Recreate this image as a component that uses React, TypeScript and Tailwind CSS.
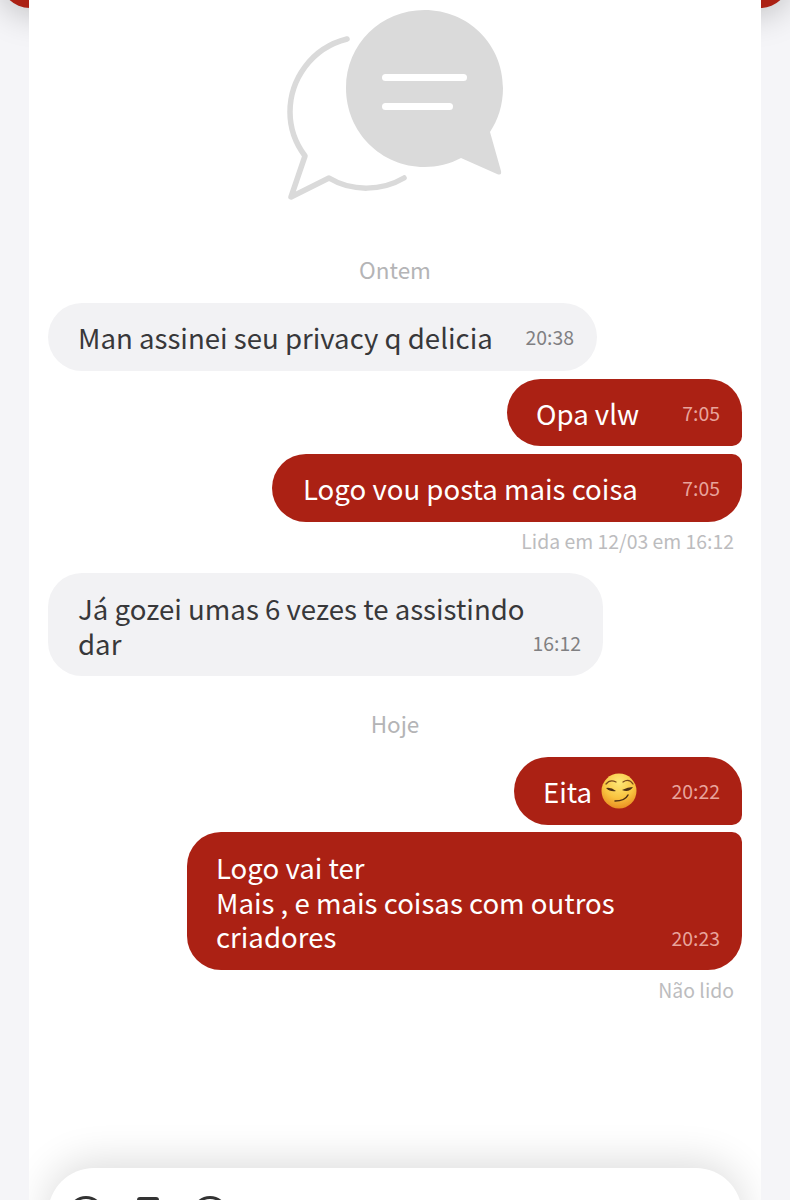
import React from 'react';

const FONT = '"Noto Sans CJK JP", "Noto Sans", sans-serif';

const EmptyIcon = () => (
  <svg width="270" height="210" viewBox="0 0 270 210" className="block">
    <path
      d="M347 39 C 311 48 290 80 290 112 C 290 129 296 144 305 156 L 291 197 L 329 178 C 352 192 382 191 404 178"
      transform="translate(-260 0)"
      fill="none"
      stroke="#dadada"
      strokeWidth="5.5"
      strokeLinecap="round"
      strokeLinejoin="round"
    />
    <path
      d="M346 88 C 346 44 381 10 424.500 10 C 468 10 503 44 503 88 C 503 105 498 120 490 132 L 501 171 Q 502 176 497 174 L 461 158 C 450 164 437 167 424.500 167 C 381 167 346 132 346 88 Z"
      transform="translate(-260 0)"
      fill="#dadada"
    />
    <rect x="122" y="74" width="85" height="7" rx="3.500" fill="#ffffff" />
    <rect x="122" y="103" width="71" height="7" rx="3.500" fill="#ffffff" />
  </svg>
);

const SmirkEmoji = () => (
  <svg width="36" height="36" viewBox="0 0 36 36" className="block">
    <defs>
      <radialGradient id="smirkFace" cx="50%" cy="25%" r="75%">
        <stop offset="0%" stopColor="#fde878" />
        <stop offset="60%" stopColor="#f9c440" />
        <stop offset="100%" stopColor="#ea8f22" />
      </radialGradient>
    </defs>
    <circle cx="18" cy="18" r="17.500" fill="url(#smirkFace)" />
    <path d="M5 11 Q 9 6 15 9" fill="none" stroke="#7a4a1c" strokeWidth="1.300" strokeLinecap="round" />
    <path d="M22 9 Q 28 5 32 11" fill="none" stroke="#7a4a1c" strokeWidth="1.300" strokeLinecap="round" />
    <path d="M5 15 Q 10 14 15 18 Q 9 19 5 15 Z" fill="#4f3014" />
    <path d="M21 17 Q 27 14 32 14 Q 28 20 21 17 Z" fill="#4f3014" />
    <path d="M14 28 Q 24 28 27 22" fill="none" stroke="#4f3014" strokeWidth="1.500" strokeLinecap="round" />
  </svg>
);

const DayLabel = ({ children, className }: { children: string; className: string }) => (
  <div className={`text-center text-[22.500px] leading-[34px] text-[#b4b4b6] ${className}`}>{children}</div>
);

const Status = ({ children, className }: { children: string; className: string }) => (
  <div className={`pr-[8px] text-right text-[19.400px] leading-[30px] text-[#bcbcbe] ${className}`}>{children}</div>
);

const App: React.FC = () => {
  return (
    <div className="relative h-[1200px] w-[790px] overflow-hidden bg-[#f5f5f8]" style={{ fontFamily: FONT }}>
      {/* red header peeking out behind the panel */}
      <div className="absolute left-0 top-[-60px] h-[68px] w-[790px] rounded-b-[30px] bg-[#ab2114] shadow-[0_6px_34px_rgba(0,0,0,0.22)]" />

      <div className="relative mx-auto flex h-[1200px] w-[732px] flex-col overflow-hidden bg-white px-[19px]">
        <div className="flex justify-center">
          <EmptyIcon />
        </div>

        <DayLabel className="mt-[42px]">Ontem</DayLabel>

        <div className="mt-[17px] flex h-[68px] w-[549px] items-center justify-between rounded-[34px] bg-[#f2f2f4] pl-[30px] pr-[23px]">
          <span className="text-[27.600px] leading-[34px] text-[#38383a]">Man assinei seu privacy q delicia</span>
          <span className="text-[19.400px] text-[#808082]">20:38</span>
        </div>

        <div className="mt-[8px] flex flex-col items-end gap-[8px]">
          <div className="flex h-[67px] w-[235px] items-center justify-between rounded-[34px] rounded-br-[10px] bg-[#ab2114] pl-[29px] pr-[22px]">
            <span className="text-[27.600px] leading-[34px] text-white">Opa vlw</span>
            <span className="text-[19.400px] text-[#e8a49c]">7:05</span>
          </div>
          <div className="flex h-[68px] w-[470px] items-center justify-between rounded-[34px] rounded-tr-[10px] bg-[#ab2114] pl-[31px] pr-[22px]">
            <span className="text-[27.600px] leading-[34px] text-white">Logo vou posta mais coisa</span>
            <span className="text-[19.400px] text-[#e8a49c]">7:05</span>
          </div>
        </div>

        <Status className="mt-[4px]">Lida em 12/03 em 16:12</Status>

        <div className="relative mt-[17px] h-[103px] w-[555px] rounded-[34px] bg-[#f2f2f4] pl-[30px] pt-[18px]">
          <p className="w-[450px] text-[27.600px] leading-[34.500px] text-[#38383a]">Já gozei umas 6 vezes te assistindo dar</p>
          <span className="absolute bottom-[18px] right-[22px] text-[19.400px] leading-[30px] text-[#808082]">16:12</span>
        </div>

        <DayLabel className="mt-[30px]">Hoje</DayLabel>

        <div className="mt-[17px] flex flex-col items-end gap-[7px]">
          <div className="flex h-[68px] w-[228px] items-center justify-between rounded-[34px] rounded-br-[10px] bg-[#ab2114] pl-[29px] pr-[22px]">
            <span className="flex items-center gap-[9px] text-[27.600px] leading-[34px] text-white">
              Eita <SmirkEmoji />
            </span>
            <span className="text-[19.400px] text-[#e8a49c]">20:22</span>
          </div>
          <div className="relative h-[138px] w-[555px] rounded-[34px] rounded-tr-[10px] bg-[#ab2114] pl-[29px] pt-[18px]">
            <p className="w-[420px] text-[27.600px] leading-[34.500px] text-white">
              Logo vai ter
              <br />
              Mais , e mais coisas com outros criadores
            </p>
            <span className="absolute bottom-[17px] right-[22px] text-[19.400px] leading-[30px] text-[#e8a49c]">20:23</span>
          </div>
        </div>

        <Status className="mt-[5px]">Não lido</Status>

        {/* composer, cut off by the bottom of the screenshot */}
        <div className="mt-auto -mb-[60px] h-[92px] shrink-0 rounded-t-[46px] bg-white px-[20px] pt-[27px] shadow-[0_-6px_40px_rgba(0,0,0,0.14)]">
          <div className="flex items-center gap-[33px]">
            <div className="h-[36px] w-[36px] rounded-full border-[3px] border-[#333333]" />
            <div className="mt-[2px] h-[36px] w-[22px] rounded-[3px] border-[3px] border-[#333333]" />
            <div className="h-[36px] w-[36px] rounded-full border-[3px] border-[#333333]" />
          </div>
        </div>
      </div>
    </div>
  );
};

export default App;
